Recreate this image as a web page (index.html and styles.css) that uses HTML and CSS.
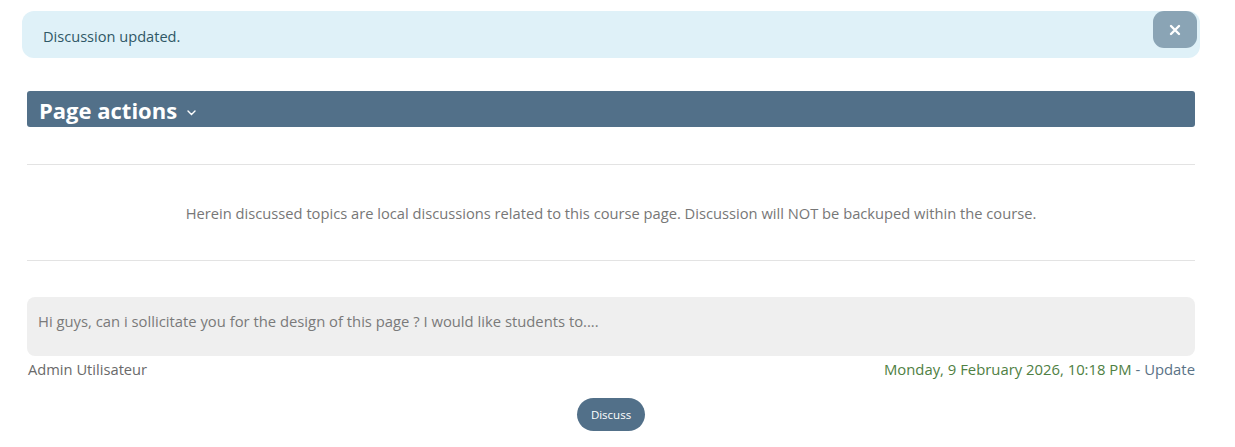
FILE: index.html
```html
<!DOCTYPE html>
<html>
<head>
<meta charset="utf-8">
<link rel="stylesheet" href="styles.css">
</head>
<body>
<div class="page">
  <div class="alert">
    <span class="alert-text">Discussion updated.</span>
    <button class="alert-close" aria-label="Close">
      <svg width="12" height="12" viewBox="0 0 12 12"><path d="M2 2 L10 10 M10 2 L2 10" stroke="#fff" stroke-width="2.4" stroke-linecap="round"/></svg>
    </button>
  </div>
  <div class="main">
    <div class="actions-bar">
      <span class="actions-title">Page actions</span>
      <svg class="chev" width="9" height="6" viewBox="0 0 9 6"><path d="M1 1 L4.5 4.5 L8 1" stroke="#fff" stroke-width="1.4" fill="none" stroke-linecap="round"/></svg>
    </div>
    <div class="notice">Herein discussed topics are local discussions related to this course page. Discussion will NOT be backuped within the course.</div>
    <div class="post">Hi guys, can i sollicitate you for the design of this page ? I would like students to....</div>
    <div class="meta">
      <span class="author">Admin Utilisateur</span>
      <span class="date">Monday, 9 February 2026, 10:18 PM <a class="update" href="#">- Update</a></span>
    </div>
    <div class="discuss-row"><button class="discuss">Discuss</button></div>
  </div>
</div>
</body>
</html>
```
FILE: styles.css
```css
html, body {
  margin: 0;
  padding: 0;
  background: #fff;
  font-family: "Open Sans", "Noto Sans", sans-serif;
}
.page {
  padding: 11px 35px 0 22px;
}
.alert {
  position: relative;
  height: 47px;
  box-sizing: border-box;
  background: #dff1f8;
  border-radius: 12px;
  display: flex;
  align-items: center;
  padding: 2px 0 0 21px;
}
.alert-text {
  color: #2f5866;
  font-size: 14.6px;
}
.alert-close {
  position: absolute;
  top: 0;
  right: 3px;
  width: 44px;
  height: 37px;
  border: none;
  border-radius: 11px;
  background: #8aa4b5;
  display: flex;
  align-items: center;
  justify-content: center;
  padding: 0;
}
.main {
  margin: 33px 5px 0;
}
.actions-bar {
  height: 36px;
  box-sizing: border-box;
  background: #527089;
  border-radius: 3px;
  display: flex;
  align-items: center;
  padding: 2px 0 0 12px;
  gap: 10px;
}
.actions-title {
  color: #fff;
  font-weight: 700;
  font-size: 22px;
}
.chev {
  margin-top: 6px;
}
.notice {
  margin-top: 37px;
  border-top: 1px solid #e3e3e3;
  border-bottom: 1px solid #e3e3e3;
  height: 95px;
  display: flex;
  align-items: center;
  justify-content: center;
  color: #777;
  font-size: 14.7px;
}
.post {
  margin-top: 36px;
  height: 59px;
  box-sizing: border-box;
  background: #efefef;
  border-radius: 8px;
  padding: 14px 0 0 11px;
  color: #7a7a7a;
  font-size: 14.8px;
}
.meta {
  display: flex;
  justify-content: space-between;
  height: 26px;
  align-items: center;
  font-size: 14.7px;
  padding-left: 1px;
}
.author {
  color: #6a6a6a;
}
.date {
  color: #4f8043;
  font-size: 14.85px;
}
.update {
  color: #5a7286;
  text-decoration: none;
}
.discuss-row {
  display: flex;
  justify-content: center;
  margin-top: 16px;
}
.discuss {
  width: 68px;
  height: 33px;
  border: none;
  border-radius: 17px;
  background: #527089;
  color: #fff;
  font-family: "Open Sans", sans-serif;
  font-size: 11.5px;
  padding: 0;
}
```
